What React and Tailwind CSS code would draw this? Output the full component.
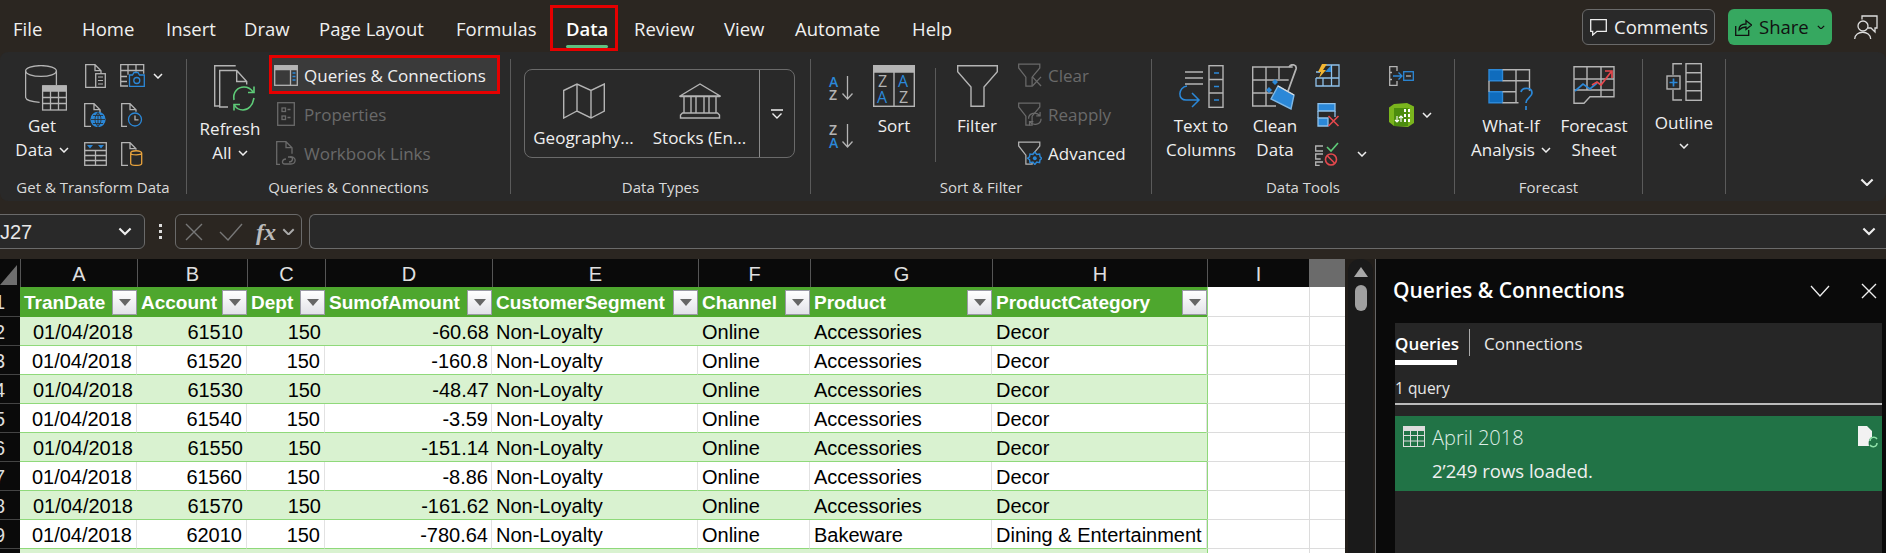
import { useState } from 'react';

const GRAY = '#b4b4b4';
const DIM = '#6a6a6a';
const BLUE = '#2b88d8';

const Chev = ({ className = '', size = 10, color = '#eeeeee' }) => (
  <svg width={size} height={size * 0.6} viewBox="0 0 10 6" fill="none" stroke={color} strokeWidth="1.5" className={className}>
    <path d="M1 1l4 4 4-4" />
  </svg>
);

const GetDataIcon = () => (
  <svg width="42" height="46" viewBox="0 0 42 46" fill="none" stroke={GRAY} strokeWidth="1.3" className="ml-[8px]">
    <ellipse cx="16" cy="6" rx="15.4" ry="5.4" />
    <path d="M.6 6v26c0 3 6 5 14 5.300M31.400 6v14" />
    <rect x="17.600" y="21" width="23.800" height="24" fill="#292929" />
    <path d="M18 21h23v5H18z" fill={GRAY} />
    <path d="M18 32.500h23M18 38.500h23M25.500 26v19M33.500 26v19" />
  </svg>
);

const DocTable = () => (
  <svg width="21" height="24" viewBox="0 0 21 24" fill="none" stroke={GRAY} strokeWidth="1.3">
    <path d="M10 23.400H.7V.7h9.300l6 6v3M10 .7v6h6" />
    <rect x="10.700" y="9.700" width="9.600" height="13.700" />
    <path d="M13 13h5M13 16.500h5M13 20h5" strokeWidth="1" />
  </svg>
);

const TableCamera = () => (
  <svg width="25" height="23" viewBox="0 0 25 23" fill="none" strokeWidth="1.3">
    <path d="M8 22H.7V.7h23v9M.7 6.500h23M.7 12.500H7M.7 17.500H7M8 .7v10M16 .7v7" stroke={GRAY} />
    <path d="M9.500 11h3l1.500-2.500h4L19.500 11h4.800v11.300H9.500z" stroke={BLUE} />
    <circle cx="16.800" cy="16.500" r="3" stroke={BLUE} />
  </svg>
);

const DocGlobe = () => (
  <svg width="22" height="24" viewBox="0 0 22 24" fill="none" strokeWidth="1.3">
    <path d="M7 23.400H.7V.7h9.300l6 6v3M10 .7v6h6" stroke={GRAY} />
    <circle cx="14" cy="16.500" r="7" fill={BLUE} stroke={BLUE} />
    <path d="M7 16.500h14M14 9.500v14M9 12.500h10M9 20.500h10M14 9.500c-4 4-4 10 0 14M14 9.500c4 4 4 10 0 14" stroke="#292929" strokeWidth=".8" />
  </svg>
);

const DocClock = () => (
  <svg width="22" height="24" viewBox="0 0 22 24" fill="none" strokeWidth="1.3">
    <path d="M6 23.400H.7V.7h8.300l6 6v2M9 .7v6h6" stroke={GRAY} />
    <circle cx="14" cy="16.500" r="6.500" stroke={BLUE} />
    <path d="M14 12.500v4.300h3.500" stroke={GRAY} />
  </svg>
);

const TableHeaders = () => (
  <svg width="23" height="24" viewBox="0 0 23 24" fill="none" stroke={GRAY} strokeWidth="1.3">
    <rect x=".7" y=".7" width="21.600" height="22.600" />
    <path d="M.7 8.500h21.600M.7 13.500h21.600M.7 18.500h21.600M11.500 8.500v15" />
    <path d="M3 3h6L6 6.500zM14 3h6l-3 3.500z" fill={BLUE} stroke="none" />
  </svg>
);

const DocCyl = () => (
  <svg width="22" height="24" viewBox="0 0 22 24" fill="none" strokeWidth="1.3">
    <path d="M7 23.400H.7V.7h8.300l6 6v1M9 .7v6h6" stroke={GRAY} />
    <path d="M9.700 11c0-3 11-3 11 0v10.500c0 2.500-11 2.500-11 0zM9.700 11c0 2.500 11 2.500 11 0" stroke="#e8a33d" />
  </svg>
);

const RefreshIcon = () => (
  <svg width="42" height="46" viewBox="0 0 42 46" fill="none" strokeWidth="1.4" className="ml-[10px]">
    <path d="M5 41H.7V.7h21" stroke={GRAY} />
    <path d="M14 42H5.700V5.500h17l10 11v3M22.700 5.500v11h10" stroke={GRAY} />
    <path d="M20 35c-1.500-8 4-13 10-13 4 0 7 2 9 5M40 33c-1.500 8-6 12-11 12-4 0-7-2-8.500-5" stroke="#5ecb78" strokeWidth="1.6" />
    <path d="M34 27.500h6v-6M26 39.500h-6v6" stroke="#5ecb78" strokeWidth="1.6" />
  </svg>
);

const PaneIcon = () => (
  <svg width="24" height="21" viewBox="0 0 24 21" fill="none" stroke={GRAY} strokeWidth="1.3">
    <rect x=".7" y=".7" width="22.600" height="19.600" />
    <path d="M1 1h22v3.500H1z" fill={GRAY} />
    <path d="M16.500 4.500v16" />
    <path d="M18.500 8h3M18.500 11.500h3M18.500 15h3" stroke={BLUE} strokeWidth="1.6" />
  </svg>
);

const PropsIcon = () => (
  <svg width="18" height="24" viewBox="0 0 18 24" fill="none" stroke={DIM} strokeWidth="1.3">
    <rect x=".7" y=".7" width="16.600" height="22.600" />
    <rect x="5" y="6" width="3.500" height="3.500" />
    <rect x="5" y="14" width="3.500" height="3.500" />
    <path d="M10.500 7.500h3M10.500 15.500h3" />
  </svg>
);

const LinksIcon = () => (
  <svg width="21" height="24" viewBox="0 0 21 24" fill="none" stroke={DIM} strokeWidth="1.3">
    <path d="M4 23.400H.7V.7h9.300l6 6v6M10 .7v6h6" />
    <path d="M10 18c-4 0-5 5-1 5h6c5 0 6-7 0-7h-3" />
    <path d="M13 21c4 0 5-5 1-5" />
  </svg>
);

const MapIcon = () => (
  <svg width="42" height="36" viewBox="0 0 42 36" fill="none" stroke={GRAY} strokeWidth="1.4">
    <path d="M.7 7.500L14 1l14 6.500L41.300 1v27L28 35l-14-7-13.300 7zM14 1v27M28 7.500V35" />
  </svg>
);

const BankIcon = () => (
  <svg width="42" height="36" viewBox="0 0 42 36" fill="none" stroke={GRAY} strokeWidth="1.4">
    <path d="M1 13L21 1l20 12zM1 13.500h40M5 14v16M12 14v16M17 14v16M25 14v16M30 14v16M37 14v16M1.500 35h39v-3l-2-2h-35l-2 2z" />
  </svg>
);

const MoreIcon = () => (
  <svg width="12" height="10" viewBox="0 0 12 10" fill="none" stroke="#eeeeee" strokeWidth="1.4">
    <path d="M0 1h12M1.500 4.500L6 9l4.500-4.500" />
  </svg>
);

const SortAZ = ({ first, second, c1, c2 }) => (
  <svg width="25" height="26" viewBox="0 0 25 26" fill="none" className="overflow-visible">
    <text x="0" y="12" fontSize="14" fontWeight="600" fontFamily="Open Sans" fill={c1}>{first}</text>
    <text x="0" y="25" fontSize="14" fontWeight="600" fontFamily="Open Sans" fill={c2}>{second}</text>
    <path d="M18.500 1v23M13.500 18.500l5 5.500 5-5.500" stroke={GRAY} strokeWidth="1.3" />
  </svg>
);

const SortIcon = () => (
  <svg width="42" height="42" viewBox="0 0 42 42" fill="none" stroke={GRAY} strokeWidth="1.4" className="overflow-visible">
    <rect x=".7" y=".7" width="40.600" height="40.600" />
    <path d="M1 1h40v6H1z" fill={GRAY} />
    <path d="M21 7v34" />
    <text x="5" y="22" fontSize="16" fontFamily="Open Sans" fill={GRAY} stroke="none">Z</text>
    <text x="4" y="38" fontSize="16" fontFamily="Open Sans" fill={BLUE} stroke="none">A</text>
    <text x="25" y="22" fontSize="16" fontFamily="Open Sans" fill={BLUE} stroke="none">A</text>
    <text x="26" y="38" fontSize="16" fontFamily="Open Sans" fill={GRAY} stroke="none">Z</text>
  </svg>
);

const FunnelBig = () => (
  <svg width="41" height="42" viewBox="0 0 41 42" fill="none" stroke={GRAY} strokeWidth="1.4">
    <path d="M.7.7h39.600v6L27 22v19.300H14V22L.7 6.700z" />
  </svg>
);

const FunnelBase = ({ stroke }) => <path d="M.7.7h22v4l-8 9.500v9.300h-6.500v-9.300L.7 4.700z" stroke={stroke} />;

const FunnelClear = () => (
  <svg width="25" height="24" viewBox="0 0 25 24" fill="none" strokeWidth="1.3">
    <FunnelBase stroke={DIM} />
    <path d="M15 14l9 9.500M24 14l-9 9.500" stroke={DIM} />
  </svg>
);

const FunnelReapply = () => (
  <svg width="25" height="24" viewBox="0 0 25 24" fill="none" strokeWidth="1.3">
    <FunnelBase stroke={DIM} />
    <path d="M11 17c0-6 8-8 12-3M24 17c0 6-8 8-12 3M23 10v4h-4M12 24v-4h4" stroke={DIM} />
  </svg>
);

const FunnelAdv = () => (
  <svg width="25" height="24" viewBox="0 0 25 24" fill="none" strokeWidth="1.3">
    <FunnelBase stroke={GRAY} />
    <path d="M17.500 11l2 2.500 3-.5.500 3 2 1.500-2 1.500-.5 3-3-.5-2 2.500-2-2.500-3 .5-.5-3-2-1.500 2-1.500.5-3 3 .5z" stroke={BLUE} strokeWidth="1.5" fill="#292929" />
    <circle cx="17.500" cy="17.500" r="2" fill={BLUE} stroke="none" />
  </svg>
);

const TextColsIcon = () => (
  <svg width="46" height="44" viewBox="0 0 46 44" fill="none" strokeWidth="1.4">
    <path d="M7 7h18M7 13h18M7 19h18" stroke={GRAY} />
    <rect x="31" y=".7" width="14" height="41.600" stroke={GRAY} />
    <path d="M31 14.500h14M31 28h14" stroke={GRAY} />
    <path d="M36 8h5M36 21.500h5M36 35h5" stroke={BLUE} strokeWidth="1.6" />
    <path d="M9 21c-9 1-10 15 0 14h11M14 28l7 7-7 7" stroke={BLUE} strokeWidth="1.5" />
  </svg>
);

const CleanIcon = () => (
  <svg width="46" height="46" viewBox="0 0 46 46" fill="none" strokeWidth="1.4">
    <path d="M24 42H.7V3h40M.7 16h36M.7 29h20M14 3v39M27 3v12" stroke={GRAY} />
    <path d="M37 3c3-4 8-2 7 2L36 27" stroke={GRAY} strokeWidth="1.8" />
    <path d="M26 22l-7 13 20 10 3-14z" fill={BLUE} stroke="#7fb8e6" />
    <path d="M26 22l16 9" stroke="#dddddd" />
    <path d="M23 15l3 3-3 3-3-3zM17 23l3 3-3 3-3-3z" fill={BLUE} />
  </svg>
);

const FlashIcon = () => (
  <svg width="25" height="23" viewBox="0 0 25 23" fill="none" strokeWidth="1.3">
    <path d="M10 1h14v21H1v-8" stroke="#8fc1ea" />
    <path d="M1 14h23M1 8h4M16.500 1v21M8 14v8" stroke="#8fc1ea" />
    <path d="M10 8h6V1.500z" fill={BLUE} />
    <path d="M7 0h5L8 6h3l-7 8 2-6H3z" fill="#f2b632" />
  </svg>
);

const RemoveDupIcon = () => (
  <svg width="23" height="24" viewBox="0 0 23 24" fill="none" strokeWidth="1.3">
    <path d="M1 .7h17v7.300H1zM1 15h10v8H1z" fill={BLUE} stroke="#8fc1ea" />
    <path d="M1 8v7M18 8v6" stroke="#8fc1ea" />
    <path d="M11.500 13l10 10M21.500 13l-10 10" stroke="#e5484d" strokeWidth="1.6" />
  </svg>
);

const ValidationIcon = () => (
  <svg width="24" height="24" viewBox="0 0 24 24" fill="none" strokeWidth="1.3">
    <path d="M8 4H.7v5H8M8 12H.7v5h5M8 20H.7v3.300h4" stroke={GRAY} />
    <path d="M12 5l4 4 7-8" stroke="#5ecb78" strokeWidth="1.6" />
    <circle cx="16" cy="17.500" r="5.500" stroke="#e5484d" strokeWidth="1.6" />
    <path d="M12.500 14l7 7" stroke="#e5484d" strokeWidth="1.6" />
  </svg>
);

const ConsolidateIcon = () => (
  <svg width="25" height="20" viewBox="0 0 25 20" fill="none" strokeWidth="1.3">
    <path d="M8 5V.7H.7V6.500H3M8 15v4.300H.7V13.500H3M.7 6.500v7" stroke={GRAY} />
    <path d="M4 10h9M9.500 6.500L13 10l-3.500 3.500" stroke={BLUE} />
    <rect x="14.700" y="5.700" width="9.600" height="8.600" stroke={BLUE} />
    <path d="M17 10h5" stroke={GRAY} />
  </svg>
);

const ModelIcon = () => (
  <svg width="25" height="24" viewBox="0 0 25 24" fill="none">
    <path d="M0 4.500L5 1l13-1 7 3.500V20l-6 4-14-1-5-4z" fill="#7ab51d" />
    <path d="M5 5h15l-1 18H5z" fill="#4c8c0e" />
    <path d="M8 13v6M6 17l2 2 2-2M12 19v-6M10 15l2-2 2 2" stroke="#ffffff" strokeWidth="1.1" />
    <path d="M15 6h2v3h-2zM19 6h2v3h-2zM15 11h2v3h-2zM19 11h2v3h-2zM15 16h2v3h-2zM19 16h2v3h-2z" fill="#ffffff" />
  </svg>
);

const WhatIfIcon = () => (
  <svg width="46" height="42" viewBox="0 0 46 42" fill="none" stroke={GRAY} strokeWidth="1.4">
    <path d="M1 .7h13.500v11H1zM1 22.700h13.500v11H1z" fill="#0f6cbd" stroke={BLUE} />
    <path d="M14.500.7h27v21M14.500 11.700h27M28 .7v33M14.500 22.700h13.500M14.500 33.700h16M1 11.700v11" />
    <path d="M33 23c1-5 11-5 11 1 0 4-6 5-6 10M38 37v4" stroke={BLUE} strokeWidth="1.7" />
  </svg>
);

const ForecastIcon = () => (
  <svg width="42" height="38" viewBox="0 0 42 38" fill="none" strokeWidth="1.4">
    <path d="M1 37.300V.7h40v30H17l-6 6.600zM1 13h40M1 24h40M14 .7v24M28 .7v30" stroke={GRAY} />
    <path d="M2 25l8-7 7 5 7-6" stroke={BLUE} strokeWidth="1.7" />
    <path d="M19 19l5-3 4 3 10-13M32 5h7v7" stroke="#e5484d" strokeWidth="1.7" />
  </svg>
);

const OutlineIcon = () => (
  <svg width="36" height="38" viewBox="0 0 36 38" fill="none" strokeWidth="1.4">
    <path d="M16 .7H7v11M16 37H7V27" stroke={GRAY} />
    <rect x="1" y="13" width="13" height="13" stroke={GRAY} fill="#292929" />
    <path d="M3.500 19.500h8M7.500 15.500v8" stroke={BLUE} strokeWidth="1.7" />
    <rect x="20" y=".7" width="15.300" height="36.600" stroke={GRAY} />
    <path d="M20 9.700h15M20 18.700h15M20 27.700h15" stroke={GRAY} />
  </svg>
);

const Label = ({ children }) => (
  <div className="h-[26px] pb-[2px] text-center text-[15px] leading-[24px] text-[#dadada]">{children}</div>
);

const Sep = () => <div className="my-[7px] w-px shrink-0 bg-[#5a5a5a]" />;

const Row = ({ icon, text, dim }) => (
  <div className="flex h-[39px] items-center gap-[6px]">
    <div className="mt-[1px] flex w-[24px] justify-center">{icon}</div>
    <span className={`mt-[2px] ${dim ? 'text-[#6a6a6a]' : 'text-[#efefef]'}`}>{text}</span>
  </div>
);

const Big = ({ icon, lines, className = '', textClass = 'mt-[3px]' }) => (
  <div className={`flex shrink-0 flex-col items-center ${className}`}>
    {icon}
    <div className={`${textClass} text-center leading-[24px] text-[#efefef] whitespace-nowrap`}>
      {lines.map((l, i) => <div key={i}>{l}</div>)}
    </div>
  </div>
);

const Tab = ({ children, className = '' }) => <div className={`shrink-0 whitespace-nowrap ${className}`}>{children}</div>;

function TitleBar() {
  return (
    <div className="flex h-[52px] shrink-0 items-center text-[18.5px] text-[#f0f0f0]">
      <div className="flex items-center pl-[13px] pt-[6px]">
        <Tab className="w-[69px]">File</Tab>
        <Tab className="w-[84px]">Home</Tab>
        <Tab className="w-[78px]">Insert</Tab>
        <Tab className="w-[75px]">Draw</Tab>
        <Tab className="w-[137px]">Page Layout</Tab>
        <Tab className="w-[110px]">Formulas</Tab>
        <Tab className="w-[68px] font-semibold text-white">
          <span className="relative inline-block">
            Data
            <span className="absolute -bottom-[5px] left-0 right-0 h-[3px] rounded bg-[#5fc080]" />
            <span className="absolute -left-[16px] -right-[10px] -top-[10px] h-[46px] border-[3px] border-[#e60000]" />
          </span>
        </Tab>
        <Tab className="w-[90px]">Review</Tab>
        <Tab className="w-[71px]">View</Tab>
        <Tab className="w-[117px]">Automate</Tab>
        <Tab>Help</Tab>
      </div>
      <div className="ml-auto mt-[2px] flex items-center pr-[8px]">
        <div className="flex h-[36px] w-[133px] items-center gap-[7px] rounded-[6px] border border-[#6a6a6a] bg-[#292929] pl-[7px]">
          <svg width="17" height="17" viewBox="0 0 17 17" fill="none" stroke="#eeeeee" strokeWidth="1.3">
            <path d="M.7.7h15.600v11.600H7L2.700 16v-3.700h-2z" />
          </svg>
          Comments
        </div>
        <div className="ml-[13px] flex h-[36px] w-[104px] items-center gap-[7px] rounded-[6px] bg-[#36a860] pl-[7px] text-[#111111]">
          <svg width="17" height="17" viewBox="0 0 17 17" fill="none" stroke="#111111" strokeWidth="1.3">
            <path d="M.7 7v9.300h13V11M4 11c0-4 3-6 7-6V1.500L16.500 6 11 10.500V8c-3 0-5 1-7 3z" />
          </svg>
          Share
          <Chev color="#111111" size={8} className="ml-[1px]" />
        </div>
        <svg width="24" height="25" viewBox="0 0 24 25" fill="none" stroke="#dddddd" strokeWidth="1.3" className="ml-[22px]">
          <path d="M8 4.500V1h15v12h-2v4l-4-4h-3" />
          <circle cx="9" cy="11" r="5" />
          <path d="M.7 24c0-9 16-9 16 0" />
        </svg>
      </div>
    </div>
  );
}

function Ribbon() {
  return (
    <div className="flex h-[149px] shrink-0 rounded-[8px] bg-[#292929] text-[17px]">
      <div className="flex w-[186px] shrink-0 flex-col">
        <div className="flex flex-1">
          <Big className="ml-[2px] w-[80px] pt-[13px]" icon={<GetDataIcon />} lines={['Get', <span key="d" className="inline-flex items-center gap-[6px]">Data <Chev /></span>]} />
          <div className="-ml-[6px] grid grid-cols-[38px_36px_16px] grid-rows-[39px_39px_39px] pt-[4px]">
            {[<DocTable />, <TableCamera />, <Chev />, <DocGlobe />, <DocClock />, <span />, <TableHeaders />, <DocCyl />, <span />].map((ic, i) => (
              <div key={i} className="flex h-[39px] items-center justify-center">{ic}</div>
            ))}
          </div>
        </div>
        <Label>Get &amp; Transform Data</Label>
      </div>
      <Sep />
      <div className="flex w-[323px] shrink-0 flex-col">
        <div className="flex flex-1">
          <Big className="ml-[2px] w-[82px] pt-[13px]" textClass="mt-[6px]" icon={<RefreshIcon />} lines={['Refresh', <span key="a" className="inline-flex items-center gap-[6px]">All <Chev /></span>]} />
          <div className="pt-[3px]">
            <div className="flex h-[39px] w-[231px] -translate-x-[2px] items-center border-[3px] border-[#e60000] bg-[#3a3a3a] pl-[2px]">
              <Row icon={<PaneIcon />} text="Queries & Connections" />
            </div>
            <div className="pl-[3px]">
              <Row icon={<PropsIcon />} text="Properties" dim />
              <Row icon={<LinksIcon />} text="Workbook Links" dim />
            </div>
          </div>
        </div>
        <Label>Queries &amp; Connections</Label>
      </div>
      <Sep />
      <div className="flex w-[299px] shrink-0 flex-col">
        <div className="flex-1 pl-[13px] pt-[17px]">
          <div className="flex h-[89px] w-[271px] rounded-[8px] border border-[#6a6a6a] text-[#efefef]">
            <div className="flex w-[234px] gap-[19px] pl-[8px] pt-[13px]">
              <div className="flex w-[101px] flex-col items-center"><MapIcon /><span className="mt-[7px] leading-[24px] whitespace-nowrap">Geography...</span></div>
              <div className="flex w-[93px] flex-col items-center"><BankIcon /><span className="mt-[7px] leading-[24px] whitespace-nowrap">Stocks (En...</span></div>
            </div>
            <div className="flex flex-1 items-center justify-center border-l border-[#8a8a8a]"><MoreIcon /></div>
          </div>
        </div>
        <Label>Data Types</Label>
      </div>
      <Sep />
      <div className="flex w-[340px] shrink-0 flex-col">
        <div className="flex flex-1 pl-[18px]">
          <div className="flex flex-col gap-[22px] pt-[23px]">
            <SortAZ first="A" second="Z" c1={BLUE} c2={GRAY} />
            <SortAZ first="Z" second="A" c1={GRAY} c2={BLUE} />
          </div>
          <Big className="ml-[15px] w-[50px] pt-[13px]" textClass="mt-[7px]" icon={<SortIcon />} lines={['Sort']} />
          <div className="ml-[16px] mt-[16px] h-[94px] w-px bg-[#5a5a5a]" />
          <Big className="ml-[16px] w-[50px] pt-[13px]" textClass="mt-[7px]" icon={<FunnelBig />} lines={['Filter']} />
          <div className="ml-[16px] pt-[3px]">
            <Row icon={<FunnelClear />} text="Clear" dim />
            <Row icon={<FunnelReapply />} text="Reapply" dim />
            <Row icon={<FunnelAdv />} text="Advanced" />
          </div>
        </div>
        <Label>Sort &amp; Filter</Label>
      </div>
      <Sep />
      <div className="flex w-[302px] shrink-0 flex-col">
        <div className="flex flex-1">
          <Big className="ml-[9px] w-[80px] pt-[13px]" textClass="mt-[5px]" icon={<TextColsIcon />} lines={['Text to', 'Columns']} />
          <Big className="ml-[4px] w-[60px] pt-[12px]" textClass="mt-[4px]" icon={<CleanIcon />} lines={['Clean', 'Data']} />
          <div className="ml-[10px] grid grid-cols-[74px_60px] grid-rows-[39px_39px_39px] pt-[4px]">
            <div className="flex h-[39px] items-center"><FlashIcon /></div>
            <div className="flex h-[39px] items-center"><ConsolidateIcon /></div>
            <div className="flex h-[39px] items-center pl-[2px]"><RemoveDupIcon /></div>
            <div className="flex h-[39px] items-center gap-[8px]"><ModelIcon /><Chev /></div>
            <div className="flex h-[39px] items-center gap-[18px]"><ValidationIcon /><Chev /></div>
            <div />
          </div>
        </div>
        <Label>Data Tools</Label>
      </div>
      <Sep />
      <div className="flex w-[187px] shrink-0 flex-col">
        <div className="flex flex-1">
          <Big className="ml-[14px] w-[84px] pt-[17px]" icon={<WhatIfIcon />} lines={['What-If', <span key="w" className="inline-flex items-center gap-[6px]">Analysis <Chev /></span>]} />
          <Big className="ml-[3px] w-[76px] pt-[14px]" textClass="mt-[10px]" icon={<ForecastIcon />} lines={['Forecast', 'Sheet']} />
        </div>
        <Label>Forecast</Label>
      </div>
      <Sep />
      <div className="flex w-[82px] shrink-0 flex-col items-center pt-[11px] text-[#efefef]">
        <OutlineIcon />
        <div className="mt-[10px] leading-[24px]">Outline</div>
        <Chev className="mt-[8px]" />
      </div>
      <Sep />
      <div className="flex flex-1 items-end justify-end pb-[15px] pr-[12px]">
        <Chev size={14} />
      </div>
    </div>
  );
}

function FormulaBar() {
  return (
    <div className="flex h-[58px] shrink-0 items-center pt-[3px] text-[#e8e8e8]">
      <div className="-ml-[8px] flex h-[35px] w-[153px] items-center rounded-[6px] border border-[#6a6a6a] bg-[#292929] pl-[7px] font-['Liberation_Sans',sans-serif] text-[20px]">
        J27
        <Chev size={14} className="ml-auto mr-[12px]" />
      </div>
      <div className="ml-[14px] mr-[13px] flex flex-col gap-[3px]">
        <div className="h-[3px] w-[3px] bg-[#dddddd]" />
        <div className="h-[3px] w-[3px] bg-[#dddddd]" />
        <div className="h-[3px] w-[3px] bg-[#dddddd]" />
      </div>
      <div className="flex h-[35px] w-[127px] items-center rounded-[6px] border border-[#6a6a6a] pl-[9px]">
        <svg width="18" height="18" viewBox="0 0 18 18" fill="none" stroke="#777777" strokeWidth="1.4"><path d="M1 1l16 16M17 1L1 17" /></svg>
        <svg width="24" height="18" viewBox="0 0 24 18" fill="none" stroke="#777777" strokeWidth="1.4" className="ml-[16px]"><path d="M1 9l8 8L23 1" /></svg>
        <span className="ml-[13px] font-['Liberation_Serif',serif] text-[24px] font-bold italic leading-none text-[#bbbbbb]">fx</span>
        <Chev size={13} color="#aaaaaa" className="ml-[6px]" />
      </div>
      <div className="ml-[7px] flex h-[35px] flex-1 items-center justify-end rounded-l-[6px] border border-r-0 border-[#6a6a6a] bg-[#292929] pr-[10px]">
        <Chev size={14} />
      </div>
    </div>
  );
}

const headers = ['TranDate', 'Account', 'Dept', 'SumofAmount', 'CustomerSegment', 'Channel', 'Product', 'ProductCategory'];

const rows = [
  ['61510', '-60.68', 'Accessories', 'Decor'],
  ['61520', '-160.8', 'Accessories', 'Decor'],
  ['61530', '-48.47', 'Accessories', 'Decor'],
  ['61540', '-3.59', 'Accessories', 'Decor'],
  ['61550', '-151.14', 'Accessories', 'Decor'],
  ['61560', '-8.86', 'Accessories', 'Decor'],
  ['61570', '-161.62', 'Accessories', 'Decor'],
  ['62010', '-780.64', 'Bakeware', 'Dining & Entertainment'],
];

const GRID = 'grid grid-cols-[20px_117px_110px_78px_167px_206px_112px_182px_215px_102px_36px]';

function RowHead({ n }) {
  return (
    <div className="flex justify-end overflow-hidden whitespace-nowrap border-b border-[#444444] bg-[#0a0a0a] pr-[15px] text-[#dddddd]">{n}</div>
  );
}

function DataRow({ n, row }) {
  const green = n % 2 === 0;
  const cell = `overflow-hidden whitespace-nowrap border-b border-b-[#8fd97a] ${green ? 'bg-[#d9f2d0]' : 'border-r border-r-[#e2e2e2] bg-white'}`;
  return (
    <div className={`${GRID} h-[29px] leading-[30px] text-black`}>
      <RowHead n={n} />
      <div className={`${cell} pr-[4px] text-right`}>01/04/2018</div>
      <div className={`${cell} pr-[4px] text-right`}>{row[0]}</div>
      <div className={`${cell} pr-[4px] text-right`}>150</div>
      <div className={`${cell} pr-[3px] text-right`}>{row[1]}</div>
      <div className={`${cell} pl-[4px]`}>Non-Loyalty</div>
      <div className={`${cell} pl-[4px]`}>Online</div>
      <div className={`${cell} pl-[4px]`}>{row[2]}</div>
      <div className={`${cell} pl-[4px]`}>{row[3]}</div>
      <div className="border-b border-l border-b-[#dcdcdc] border-l-[#8fd97a] bg-white" />
      <div className="border-b border-l border-[#dcdcdc] bg-white" />
    </div>
  );
}

function Sheet() {
  const letters = ['A', 'B', 'C', 'D', 'E', 'F', 'G', 'H', 'I'];
  return (
    <div className="w-[1345px] shrink-0 overflow-hidden font-['Liberation_Sans',sans-serif] text-[20px]">
      <div className={`${GRID} h-[28px] bg-[#0a0a0a] leading-[30px] text-[#e0e0e0]`}>
        <div className="flex items-center">
          <svg width="18" height="22" viewBox="0 0 18 22"><path d="M17 1v20H0z" fill="#6e6e6e" /></svg>
        </div>
        {letters.map((l) => (
          <div key={l} className="border-l border-b-2 border-l-[#555555] border-b-[#999999] text-center">{l}</div>
        ))}
        <div className="border-b-2 border-[#1f7a45] bg-[#6b6b6b]" />
      </div>
      <div className={`${GRID} h-[30px] leading-[30px]`}>
        <RowHead n={1} />
        {headers.map((h) => (
          <div key={h} className="flex items-center justify-between overflow-hidden bg-[#4ea72e] pl-[4px] text-[19px] font-bold text-white">
            <span className="mt-[2px]">{h}</span>
            <span className="flex h-[25px] w-[25px] shrink-0 items-center justify-center border border-[#9a9aa5] bg-gradient-to-b from-white to-[#e2e2e8]">
              <svg width="12" height="7" viewBox="0 0 12 7"><path d="M0 0h12L6 7z" fill="#666666" /></svg>
            </span>
          </div>
        ))}
        <div className="border-b border-l border-b-[#dcdcdc] border-l-[#8fd97a] bg-white" />
        <div className="border-b border-l border-[#dcdcdc] bg-white" />
      </div>
      {rows.map((row, i) => <DataRow key={i} n={i + 2} row={row} />)}
      <div className={`${GRID} h-[29px]`}>
        <div className="bg-[#0a0a0a]" />
        <div className="col-span-8 bg-[#d9f2d0]" />
        <div className="border-l border-[#8fd97a] bg-white" />
        <div className="border-l border-[#dcdcdc] bg-white" />
      </div>
    </div>
  );
}

function ScrollBar() {
  return (
    <div className="w-[31px] shrink-0 border-r border-[#666666] bg-[#221e1a] pl-[3px] pr-[2px]">
      <div className="flex h-full flex-col items-center rounded-t-[12px] bg-[#1a1a1a] pt-[8px]">
        <svg width="14" height="10" viewBox="0 0 14 10"><path d="M7 0l7 10H0z" fill="#a8a8a8" /></svg>
        <div className="mt-[8px] h-[26px] w-[12px] rounded-full bg-[#a0a0a0]" />
      </div>
    </div>
  );
}

function QueriesPane() {
  const [tab] = useState('Queries');
  return (
    <div className="flex flex-1 flex-col bg-[#0a0a0a] pl-[19px] pr-[4px] text-white">
      <div className="flex h-[64px] shrink-0 items-center">
        <span className="-ml-[2px] -mt-[1px] text-[21px] font-semibold">Queries &amp; Connections</span>
        <svg width="20" height="12" viewBox="0 0 20 12" fill="none" stroke="#eeeeee" strokeWidth="1.3" className="ml-auto"><path d="M1 1l9 10 9-10" /></svg>
        <svg width="16" height="16" viewBox="0 0 16 16" fill="none" stroke="#eeeeee" strokeWidth="1.4" className="ml-[31px] mr-[5px]"><path d="M1 1l14 14M15 1L1 15" /></svg>
      </div>
      <div className="flex flex-1 flex-col bg-[#262626]">
        <div className="flex h-[42px] shrink-0 items-start text-[17px]">
          <div className="h-[42px] w-[62px] border-b-[5px] border-white pt-[8px] font-semibold leading-[26px]">{tab}</div>
          <div className="ml-[12px] mt-[6px] h-[27px] w-px bg-[#aaaaaa]" />
          <div className="ml-[14px] pt-[8px] leading-[26px] text-[#e8e8e8]">Connections</div>
        </div>
        <div className="flex h-[40px] shrink-0 items-end border-b-2 border-[#bbbbbb] pb-[2px] text-[15.500px] leading-[26px] text-[#e8e8e8]">1 query</div>
        <div className="mt-[11px] flex h-[75px] shrink-0 bg-[#217346] pl-[8px] pr-[4px] pt-[10px]">
          <svg width="22" height="21" viewBox="0 0 22 21" fill="none" stroke="#dddddd" strokeWidth="1">
            <rect x=".5" y=".5" width="21" height="20" />
            <path d="M.5.5h21v4H.5z" fill="#dddddd" />
            <path d="M.5 9.500h21M.5 15h21M7.500 4.500v16M14.500 4.500v16" />
          </svg>
          <div className="ml-[7px] flex-1">
            <div className="text-[20px] font-light leading-[24px] text-[#dfeee6]">April 2018</div>
            <div className="mt-[7px] text-[18.500px] leading-[27px] text-[#f0f0f0]">2&#8217;249 rows loaded.</div>
          </div>
          <svg width="20" height="22" viewBox="0 0 20 22" fill="none">
            <path d="M0 0h9l5 5v6c-3 1-4 5-3 9H0z" fill="#f2f2f2" />
            <path d="M12 15c0-4 5-5 7-2M19 17c0 4-5 5-7 2" stroke="#8fe0a8" strokeWidth="1.5" />
          </svg>
        </div>
      </div>
    </div>
  );
}

export default function App() {
  return (
    <div className="flex h-[553px] w-[1886px] flex-col overflow-hidden bg-[#2b2621] font-['Open_Sans',sans-serif]">
      <TitleBar />
      <Ribbon />
      <FormulaBar />
      <div className="flex flex-1 overflow-hidden">
        <Sheet />
        <ScrollBar />
        <QueriesPane />
      </div>
    </div>
  );
}
